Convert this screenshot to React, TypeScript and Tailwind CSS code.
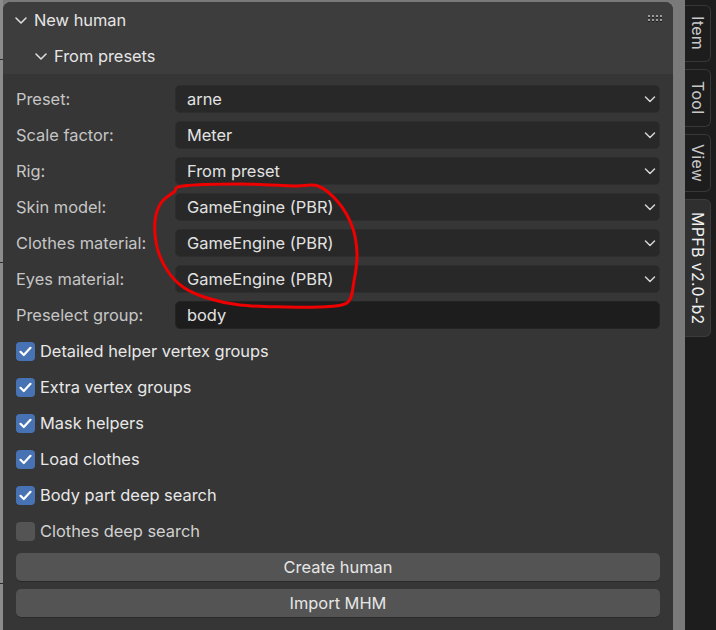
import React from 'react';

// Blender-like sidebar panel: "New human" from MPFB
const fields = [
    {label: 'Preset:', value: 'arne'},
    {label: 'Scale factor:', value: 'Meter'},
    {label: 'Rig:', value: 'From preset'},
    {label: 'Skin model:', value: 'GameEngine (PBR)'},
    {label: 'Clothes material:', value: 'GameEngine (PBR)'},
    {label: 'Eyes material:', value: 'GameEngine (PBR)'},
];

const checks = [
    {label: 'Detailed helper vertex groups', on: true},
    {label: 'Extra vertex groups', on: true},
    {label: 'Mask helpers', on: true},
    {label: 'Load clothes', on: true},
    {label: 'Body part deep search', on: true},
    {label: 'Clothes deep search', on: false},
];

const tabs = [
    {label: 'Item', h: 'h-[57px]', active: false},
    {label: 'Tool', h: 'h-[58px]', active: false},
    {label: 'View', h: 'h-[58px]', active: false},
    {label: 'MPFB v2.0-b2', h: 'h-[138px]', active: true},
];

// hand-drawn red loop, smoothed with catmull-rom
const loop: [number, number][] = [
    [183, 186], [240, 184], [295, 186], [318, 186], [338, 202], [352, 226],
    [357, 253], [354, 281], [347, 303], [318, 307], [285, 307], [240, 305],
    [207, 298], [183, 287], [167, 270], [157, 247], [155, 221], [161, 203], [174, 192],
];

function smooth(pts: [number, number][]) {
    const n = pts.length;
    let d = `M${pts[0][0]},${pts[0][1]}`;
    for (let i = 0; i < n; i++) {
        const p0 = pts[(i - 1 + n) % n];
        const p1 = pts[i];
        const p2 = pts[(i + 1) % n];
        const p3 = pts[(i + 2) % n];
        const c1x = p1[0] + (p2[0] - p0[0]) / 6;
        const c1y = p1[1] + (p2[1] - p0[1]) / 6;
        const c2x = p2[0] - (p3[0] - p1[0]) / 6;
        const c2y = p2[1] - (p3[1] - p1[1]) / 6;
        d += ` C${c1x},${c1y} ${c2x},${c2y} ${p2[0]},${p2[1]}`;
    }
    return d;
}

function Chevron({className}: { className?: string }) {
    return (
        <svg width="12" height="7" viewBox="0 0 12 7" className={className}>
            <path d="M1.5 1 L6 5.5 L10.5 1" fill="none" stroke="#d4d4d4" strokeWidth="1.5" strokeLinecap="round" strokeLinejoin="round"/>
        </svg>
    );
}

function HeadChevron() {
    return (
        <svg width="12" height="7" viewBox="0 0 12 7">
            <path d="M1 1 L6 6 L11 1" fill="none" stroke="#e0e0e0" strokeWidth="1.5" strokeLinecap="round" strokeLinejoin="round"/>
        </svg>
    );
}

function Grip() {
    return (
        <svg width="15" height="8" viewBox="0 0 15 8">
            {[0, 4, 8, 12].map((x) => (
                <g key={x}>
                    <rect x={x} y={1} width="2" height="2" fill="#1f1f1f"/>
                    <rect x={x} y={5} width="2" height="2" fill="#1f1f1f"/>
                    <rect x={x} y={0} width="2" height="2" fill="#9a9a9a"/>
                    <rect x={x} y={4} width="2" height="2" fill="#9a9a9a"/>
                </g>
            ))}
        </svg>
    );
}

function Check({on}: { on: boolean }) {
    return (
        <div className={on
            ? "w-[19px] h-[19px] rounded-[4px] bg-[#4772b3] flex items-center justify-center shrink-0"
            : "w-[19px] h-[19px] rounded-[4px] bg-[#545454] shrink-0"}>
            {on && (
                <svg width="13" height="11" viewBox="0 0 13 11">
                    <path d="M1.5 5.8 L4.8 9 L11.5 1.8" fill="none" stroke="#ffffff" strokeWidth="2.2" strokeLinecap="round" strokeLinejoin="round"/>
                </svg>
            )}
        </div>
    );
}

export default function App() {
    return (
        <div className="relative flex w-[716px] h-[630px] overflow-hidden bg-[#7a7a7a] font-['Inter','Noto_Sans',sans-serif] text-[16.4px]">
            {/* viewport edge */}
            <div className="w-[3px] shrink-0 bg-[#8c8c8c] flex flex-col">
                <div className="h-[59px]"/>
                <div className="h-px bg-[#2a2a2a]"/>
                <div className="h-[202px]"/>
                <div className="h-px bg-[#2a2a2a]"/>
                <div className="h-[320px]"/>
                <div className="h-px bg-[#2a2a2a]"/>
            </div>

            {/* panel */}
            <div className="w-[670px] shrink-0 pt-[2px]">
                <div className="h-full rounded-t-[8px] overflow-hidden bg-[#363636]">
                    <div className="bg-[#3d3d3d]">
                        <div className="h-9 flex items-center pl-[12px] pr-[10px] text-[#e6e6e6]">
                            <HeadChevron/>
                            <span className="ml-[7px]">New human</span>
                            <div className="ml-auto mb-[2px]"><Grip/></div>
                        </div>
                        <div className="h-9 flex items-center pl-[32px] text-[#e6e6e6]">
                            <HeadChevron/>
                            <span className="ml-[7px]">From presets</span>
                        </div>
                    </div>

                    <div className="px-[13px] pt-[7px]">
                        {fields.map((f) => (
                            <div key={f.label} className="h-9 flex items-center">
                                <div className="w-[159px] shrink-0 text-[#c6c6c6]">{f.label}</div>
                                <div className="flex-1 h-[28px] rounded-[5px] bg-[#282828] border border-[#2e2e2e] flex items-center pl-[11px] pr-[3px] text-[#e2e2e2]">
                                    <span>{f.value}</span>
                                    <Chevron className="ml-auto"/>
                                </div>
                            </div>
                        ))}
                        <div className="h-9 flex items-center">
                            <div className="w-[159px] shrink-0 text-[#c6c6c6]">Preselect group:</div>
                            <div className="flex-1 h-[28px] rounded-[5px] bg-[#1d1d1d] border border-[#242424] flex items-center pl-[11px] text-[#e2e2e2]">
                                body
                            </div>
                        </div>

                        {checks.map((c) => (
                            <div key={c.label} className="h-9 flex items-center">
                                <Check on={c.on}/>
                                <span className={c.on ? "ml-[5px] text-[#e8e8e8]" : "ml-[5px] text-[#d2d2d2]"}>{c.label}</span>
                            </div>
                        ))}

                        <div className="h-9 flex items-center">
                            <button className="w-full h-[28px] rounded-[5px] bg-[#545454] text-[#e6e6e6] shadow-[0_1px_0_#2a2a2a]">Create human</button>
                        </div>
                        <div className="h-9 flex items-center">
                            <button className="w-full h-[28px] rounded-[5px] bg-[#545454] text-[#e6e6e6] shadow-[0_1px_0_#2a2a2a]">Import MHM</button>
                        </div>
                    </div>
                </div>
            </div>

            {/* gutter */}
            <div className="w-[12px] shrink-0"/>

            {/* sidebar tabs */}
            <div className="flex-1 bg-[#1d1d1d] flex flex-col gap-[7px] pt-[5px]">
                {tabs.map((t) => (
                    <div key={t.label}
                         className={t.active
                             ? `${t.h} w-[26px] rounded-r-[6px] bg-[#2f2f2f] border border-l-0 border-[#3c3c3c] flex items-center justify-center`
                             : `${t.h} w-[26px] rounded-r-[6px] bg-[#1d1d1d] border border-l-0 border-[#383838] flex items-center justify-center`}>
                        <span className={t.active
                            ? "[writing-mode:vertical-rl] text-[#f0f0f0] text-[16px] tracking-[0.3px]"
                            : "[writing-mode:vertical-rl] text-[#c8c8c8] text-[16px] tracking-[0.3px]"}>{t.label}</span>
                    </div>
                ))}
            </div>

            {/* red annotation */}
            <svg className="absolute left-0 top-0 pointer-events-none" width="716" height="630">
                <path d={smooth(loop)} fill="none" stroke="#ee0000" strokeWidth="3" strokeLinecap="round" strokeLinejoin="round"/>
            </svg>
        </div>
    );
}
